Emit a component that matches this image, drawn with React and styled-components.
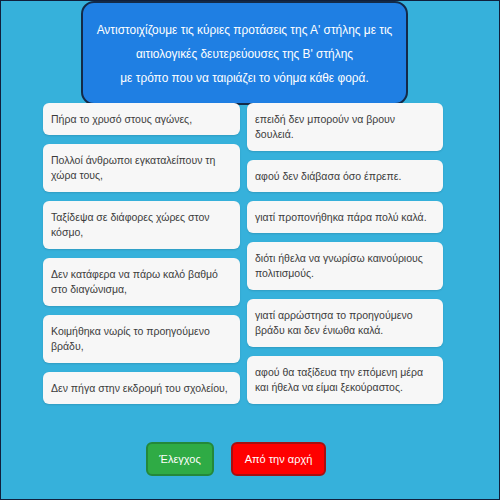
import React from 'react'
import styled, { createGlobalStyle } from 'styled-components'

const Global = createGlobalStyle`
  html, body { margin: 0; padding: 0; }
  body { font-family: "Liberation Sans", Arial, sans-serif; }
`

const Frame = styled.div`
  box-sizing: border-box;
  width: 500px;
  height: 500px;
  border: 1px solid #10203c;
  background: #36b1db;
  overflow: hidden;
`

const Header = styled.div`
  box-sizing: border-box;
  width: 327px;
  height: 104px;
  margin: 0 0 0 80px;
  padding-top: 15px;
  background: #1f7fe3;
  border: 2px solid #132a48;
  border-radius: 13px;
  color: #fff;
  font-size: 11.9px;
  line-height: 24px;
  text-align: center;
`

const Grid = styled.div`
  width: 400px;
  margin: -2px 0 0 42px;
  display: grid;
  grid-template-columns: 197px 196px;
  column-gap: 7px;
`

const Column = styled.div`
  display: flex;
  flex-direction: column;
  gap: 9px;
`

const Card = styled.div`
  box-sizing: border-box;
  min-height: ${p => (p.$tall ? '48px' : '32px')};
  padding: 9px ${p => (p.$right ? '9px' : '4px')} 8px 8px;
  background: #f7f7f7;
  border-radius: 6px;
  box-shadow: 0 1px 2px rgba(0, 0, 0, 0.12);
  color: #3c3c3c;
  font-size: 10.5px;
  line-height: 15px;
`

const Actions = styled.div`
  display: flex;
  gap: 17px;
  margin: 38px 0 0 145px;
`

const Button = styled.button`
  box-sizing: border-box;
  height: 34px;
  width: ${p => p.$w}px;
  padding: 0;
  border: 2px solid ${p => p.$edge};
  border-radius: 6px;
  background: ${p => p.$bg};
  color: #fff;
  font-family: "Liberation Sans", Arial, sans-serif;
  font-size: 11px;
`

const left = [
  ['Πήρα το χρυσό στους αγώνες,', false],
  ['Πολλοί άνθρωποι εγκαταλείπουν τη χώρα τους,', true],
  ['Ταξίδεψα σε διάφορες χώρες στον κόσμο,', true],
  ['Δεν κατάφερα να πάρω καλό βαθμό στο διαγώνισμα,', true],
  ['Κοιμήθηκα νωρίς το προηγούμενο βράδυ,', true],
  ['Δεν πήγα στην εκδρομή του σχολείου,', false],
]

const right = [
  ['επειδή δεν μπορούν να βρουν δουλειά.', true],
  ['αφού δεν διάβασα όσο έπρεπε.', false],
  ['γιατί προπονήθηκα πάρα πολύ καλά.', false],
  ['διότι ήθελα να γνωρίσω καινούριους πολιτισμούς.', true],
  ['γιατί αρρώστησα το προηγούμενο βράδυ και δεν ένιωθα καλά.', true],
  ['αφού θα ταξίδευα την επόμενη μέρα και ήθελα να είμαι ξεκούραστος.', true],
]

export default function App() {
  return (
    <>
      <Global />
      <Frame>
        <Header>
          Αντιστοιχίζουμε τις κύριες προτάσεις της Α' στήλης με τις
          <br />
          αιτιολογικές δευτερεύουσες της Β' στήλης
          <br />
          με τρόπο που να ταιριάζει το νόημα κάθε φορά.
        </Header>
        <Grid>
          <Column>
            {left.map(([t, tall]) => (
              <Card key={t} $tall={tall}>{t}</Card>
            ))}
          </Column>
          <Column>
            {right.map(([t, tall]) => (
              <Card key={t} $tall={tall} $right>{t}</Card>
            ))}
          </Column>
        </Grid>
        <Actions>
          <Button $w={68} $bg="#2fab45" $edge="#24883a">Έλεγχος</Button>
          <Button $w={95} $bg="#ff0000" $edge="#a80f0f">Από την αρχή</Button>
        </Actions>
      </Frame>
    </>
  )
}
